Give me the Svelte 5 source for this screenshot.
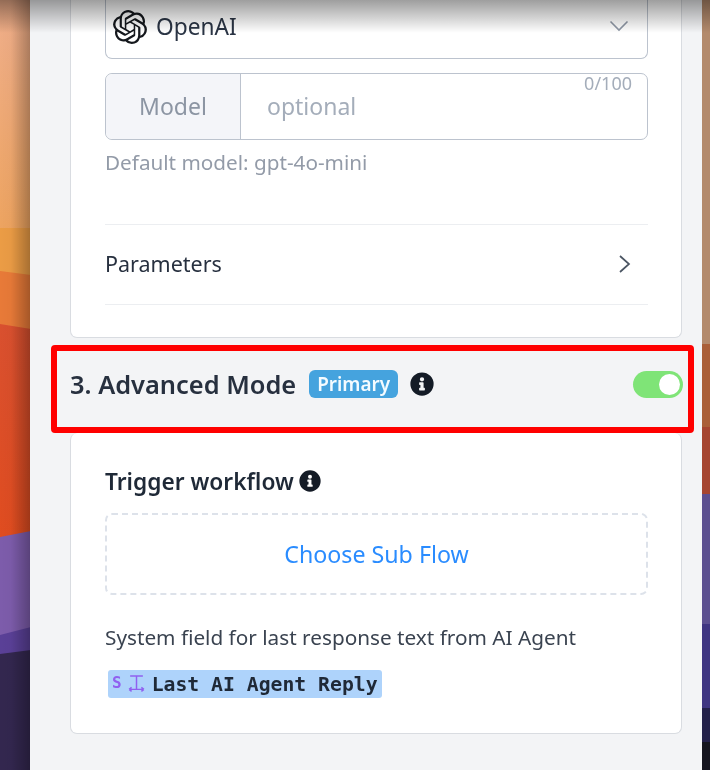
<script lang="ts">
	const fieldName = 'Last AI Agent Reply';
</script>

<div class="desktop">
	<!-- wallpaper showing either side of the settings panel -->
	<svg class="wallpaper" viewBox="0 0 710 770" preserveAspectRatio="none" aria-hidden="true">
		<defs>
			<linearGradient id="tan" x1="0" y1="0" x2="0" y2="1">
				<stop offset="0" stop-color="#efae8b" />
				<stop offset="1" stop-color="#eda35e" />
			</linearGradient>
			<linearGradient id="red" x1="0" y1="0" x2="0" y2="1">
				<stop offset="0" stop-color="#d9502f" />
				<stop offset="1" stop-color="#e04c1f" />
			</linearGradient>
			<linearGradient id="fade" x1="0" y1="0" x2="1" y2="0">
				<stop offset="0" stop-color="#000" stop-opacity="0" />
				<stop offset="0.35" stop-color="#000" stop-opacity="0.02" />
				<stop offset="1" stop-color="#000" stop-opacity="0.3" />
			</linearGradient>
		</defs>
		<rect x="0" y="0" width="31" height="240" fill="url(#tan)" />
		<polygon points="0,228 31,228 31,280 0,280" fill="#eb9c45" />
		<polygon points="0,271 31,275 31,340 0,340" fill="#e87a38" />
		<polygon points="0,324 31,329 31,545 0,545" fill="url(#red)" />
		<polygon points="0,537 31,531 31,645 0,645" fill="#7d5cab" />
		<polygon points="0,635 31,627 31,660 0,660" fill="#5a4097" />
		<polygon points="0,654 31,650 31,770 0,770" fill="#33274f" />
		<rect x="0" y="0" width="31" height="770" fill="url(#fade)" />

		<rect x="701" y="0" width="9" height="350" fill="#b38a6c" />
		<rect x="701" y="344" width="9" height="90" fill="#aa5f38" />
		<rect x="701" y="427" width="9" height="75" fill="#a64530" />
		<rect x="701" y="494" width="9" height="135" fill="#5c4f90" />
		<rect x="701" y="624" width="9" height="90" fill="#3f3582" />
		<rect x="701" y="708" width="9" height="40" fill="#23204a" />
		<rect x="701" y="742" width="9" height="28" fill="#15151f" />
	</svg>

	<main class="panel">
		<section class="card first">
			<div class="select">
				<span class="provider">
					<svg class="openai" viewBox="0 0 24 24" aria-hidden="true">
						<path d="M22.28 9.82a5.98 5.98 0 0 0-.52-4.91 6.05 6.05 0 0 0-6.51-2.9A6.07 6.07 0 0 0 4.98 4.18a5.98 5.98 0 0 0-4 2.9 6.05 6.05 0 0 0 .74 7.1 5.98 5.98 0 0 0 .51 4.91 6.05 6.05 0 0 0 6.52 2.9A5.98 5.98 0 0 0 13.26 24a6.06 6.06 0 0 0 5.77-4.21 5.99 5.99 0 0 0 4-2.9 6.06 6.06 0 0 0-.75-7.07zM13.26 22.43a4.48 4.48 0 0 1-2.88-1.04l.14-.08 4.78-2.76a.79.79 0 0 0 .39-.68v-6.74l2.02 1.17a.07.07 0 0 1 .04.05v5.58a4.5 4.5 0 0 1-4.49 4.5zM3.6 18.3a4.47 4.47 0 0 1-.53-3.01l.14.08 4.78 2.76a.77.77 0 0 0 .78 0l5.84-3.37v2.33a.08.08 0 0 1-.03.06L9.74 19.95a4.5 4.5 0 0 1-6.14-1.65zM2.34 7.9a4.49 4.49 0 0 1 2.37-1.97v5.68a.77.77 0 0 0 .39.68l5.81 3.35-2.02 1.17a.08.08 0 0 1-.07 0L3.99 14.02A4.5 4.5 0 0 1 2.34 7.87zm16.6 3.86L13.1 8.36l2.02-1.16a.08.08 0 0 1 .07 0l4.83 2.79a4.49 4.49 0 0 1-.68 8.1v-5.68a.79.79 0 0 0-.4-.66zm2.01-3.02l-.14-.09-4.77-2.78a.78.78 0 0 0-.79 0L9.41 9.23V6.9a.07.07 0 0 1 .03-.06l4.83-2.79a4.5 4.5 0 0 1 6.68 4.66zM8.31 12.86L6.29 11.7a.08.08 0 0 1-.04-.06V6.07a4.5 4.5 0 0 1 7.37-3.45l-.14.08L8.7 5.46a.8.8 0 0 0-.39.68zm1.1-2.37l2.6-1.5 2.61 1.5v3l-2.6 1.5-2.61-1.5z" />
					</svg>
					OpenAI
				</span>
				<svg class="chevron" viewBox="0 0 20 20" aria-hidden="true"><path d="M1.5 5.5l8.5 8.5 8.5-8.5" /></svg>
			</div>

			<div class="model">
				<span class="addon">Model</span>
				<span class="placeholder">optional</span>
				<span class="count">0/100</span>
			</div>
			<p class="hint">Default model: gpt-4o-mini</p>

			<div class="parameters">
				<span>Parameters</span>
				<svg viewBox="0 0 20 20" aria-hidden="true"><path d="M6 2l9 8-9 8" /></svg>
			</div>
		</section>

		<header class="section-head">
			<h2>3. Advanced Mode</h2>
			<span class="badge">Primary</span>
			<svg class="info big" viewBox="0 0 512 512" aria-hidden="true">
				<path d="M256 8a248 248 0 1 0 0 496 248 248 0 0 0 0-496zm0 102a46 46 0 1 1 0 92 46 46 0 0 1 0-92zm62 268a14 14 0 0 1-14 14h-96a14 14 0 0 1-14-14v-28a14 14 0 0 1 14-14h14v-60h-14a14 14 0 0 1-14-14v-28a14 14 0 0 1 14-14h68a14 14 0 0 1 14 14v102h14a14 14 0 0 1 14 14z" />
			</svg>
			<span class="toggle"><span class="knob"></span></span>
		</header>

		<section class="card second">
			<div class="trigger">
				<h3>Trigger workflow</h3>
				<svg class="info" viewBox="0 0 512 512" aria-hidden="true">
					<path d="M256 8a248 248 0 1 0 0 496 248 248 0 0 0 0-496zm0 102a46 46 0 1 1 0 92 46 46 0 0 1 0-92zm62 268a14 14 0 0 1-14 14h-96a14 14 0 0 1-14-14v-28a14 14 0 0 1 14-14h14v-60h-14a14 14 0 0 1-14-14v-28a14 14 0 0 1 14-14h68a14 14 0 0 1 14 14v102h14a14 14 0 0 1 14 14z" />
				</svg>
			</div>
			<div class="dropzone">Choose Sub Flow</div>
			<p class="system">System field for last response text from AI Agent</p>
			<span class="chip">
				<span class="type">S</span>
				<svg class="text-cursor" viewBox="0 0 16 16" aria-hidden="true">
					<path d="M2 1.5h12M8 1.5v12M1 14h14M1 14l2.4-1.8M1 14l2.4 1.8M15 14l-2.4-1.8M15 14l-2.4 1.8" />
				</svg>
				<span class="name">{fieldName}</span>
			</span>
		</section>
	</main>
	<div class="top-shade"></div>
</div>

<style>
	:global(body) {
		margin: 0;
	}

	.desktop {
		position: relative;
		height: 770px;
		overflow: hidden;
		padding: 0 8px 0 30px;
		box-sizing: border-box;
		background: #33274f;
		font-family: 'Noto Sans', sans-serif;
		color: #1f2937;
		filter: blur(0.4px);
	}

	.wallpaper {
		position: absolute;
		inset: 0;
		width: 100%;
		height: 100%;
	}

	.panel {
		position: relative;
		height: 100%;
		background: #f3f4f6;
		padding: 0 20px 0 40px;
		box-sizing: border-box;
		display: flex;
		flex-direction: column;
	}

	.top-shade {
		position: absolute;
		inset: 0 0 auto 0;
		height: 33px;
		background: linear-gradient(180deg, rgb(0 0 0 / 38%), rgb(0 0 0 / 0));
		pointer-events: none;
	}

	.card {
		background: #fff;
		border: 1px solid #d9dce1;
		border-radius: 7px;
		box-sizing: border-box;
		padding: 0 33px 0 34px;
	}

	.first {
		height: 347px;
		margin-top: -9px;
		border-top: 0;
		flex: none;
	}

	.select {
		height: 68px;
		box-sizing: border-box;
		border: 1px solid #bcc3ce;
		border-top: 0;
		border-radius: 0 0 7px 7px;
		display: flex;
		align-items: flex-end;
		justify-content: space-between;
		padding: 0 18px 12px 7px;
	}

	.provider {
		display: flex;
		align-items: center;
		gap: 9px;
		font-size: 22.7px;
		line-height: 34px;
		color: #2a3444;
		margin-bottom: 2px;
	}

	.openai {
		width: 34px;
		height: 34px;
		fill: #15181d;
	}

	.chevron {
		width: 20px;
		height: 20px;
		fill: none;
		stroke: #8e97a5;
		stroke-width: 1.6;
		margin-bottom: 10px;
	}

	.model {
		position: relative;
		margin-top: 14px;
		height: 67px;
		box-sizing: border-box;
		border: 1px solid #bcc3ce;
		border-radius: 7px;
		display: flex;
		align-items: center;
		font-size: 23px;
		line-height: 31px;
	}

	.addon {
		width: 135px;
		height: 100%;
		flex: none;
		box-sizing: border-box;
		display: flex;
		align-items: center;
		justify-content: center;
		background: #f4f5f9;
		border-right: 1px solid #bcc3ce;
		border-radius: 7px 0 0 7px;
		color: #8c95a3;
	}

	.placeholder {
		margin-left: 26px;
		color: #a4adba;
	}

	.count {
		position: absolute;
		top: -3px;
		right: 15px;
		font-size: 18px;
		line-height: 24px;
		color: #a4adba;
	}

	.hint {
		margin: 8px 0 0;
		font-size: 20.7px;
		line-height: 28px;
		color: #939ba8;
	}

	.parameters {
		margin-top: 48px;
		height: 77px;
		padding-bottom: 2px;
		border-top: 1px solid #eceef1;
		border-bottom: 1px solid #eceef1;
		display: flex;
		align-items: center;
		justify-content: space-between;
		font-size: 21.5px;
		color: #27303f;
	}

	.parameters svg {
		width: 20px;
		height: 20px;
		fill: none;
		stroke: #4b5563;
		stroke-width: 1.7;
		margin-right: 14px;
	}

	.section-head {
		flex: none;
		height: 88px;
		margin: 7px -12px 0 -19px;
		box-sizing: border-box;
		border: 6px solid #ff0000;
		border-radius: 4px;
		padding: 0 5px 10px 13px;
		display: flex;
		align-items: center;
		background: #f3f4f6;
	}

	h2 {
		margin: 0;
		font-size: 25.4px;
		font-weight: 600;
		color: #27303f;
	}

	.badge {
		margin-left: 13px;
		background: #45a3de;
		color: #f4fbff;
		font-size: 18.9px;
		font-weight: 600;
		line-height: 28px;
		padding: 0 8px;
		border-radius: 6px;
	}

	.info {
		width: 22px;
		height: 22px;
		fill: #141b26;
		flex: none;
	}

	.big {
		width: 24px;
		height: 24px;
		margin-left: 12px;
	}

	.toggle {
		margin-left: auto;
		width: 50px;
		height: 27px;
		border-radius: 14px;
		background: #7fe477;
		display: flex;
		align-items: center;
		justify-content: flex-end;
		padding-right: 3px;
		box-sizing: border-box;
	}

	.knob {
		width: 21px;
		height: 21px;
		border-radius: 50%;
		background: #fff;
	}

	.second {
		height: 301px;
		flex: none;
		border-top: 0;
		padding-top: 31px;
	}

	.trigger {
		display: flex;
		align-items: center;
		gap: 5px;
		height: 34px;
	}

	h3 {
		margin: 0;
		font-size: 22.7px;
		font-weight: 600;
		color: #1f2937;
	}

	.dropzone {
		margin-top: 15px;
		height: 82px;
		box-sizing: border-box;
		border: 2px dashed #dde2ea;
		border-radius: 7px;
		display: flex;
		align-items: center;
		justify-content: center;
		font-size: 23.2px;
		color: #2a8cff;
	}

	.system {
		margin: 26px 0 0;
		font-size: 20.75px;
		line-height: 32px;
		color: #3a4350;
	}

	.chip {
		display: inline-flex;
		align-items: center;
		margin: 17px 0 0 3px;
		height: 28px;
		padding: 0 4px;
		border-radius: 3px;
		background: #aed3fb;
		gap: 6px;
	}

	.type {
		font-family: 'DejaVu Sans Mono', monospace;
		font-weight: 700;
		font-size: 16px;
		color: #9061f0;
		margin-bottom: 3px;
	}

	.text-cursor {
		width: 17px;
		height: 18px;
		fill: none;
		stroke: #9061f0;
		stroke-width: 1.4;
		margin: 0 1px 2px 0;
	}

	.name {
		font-family: 'DejaVu Sans Mono', monospace;
		font-weight: 700;
		font-size: 19.75px;
		color: #1f2937;
	}
</style>
